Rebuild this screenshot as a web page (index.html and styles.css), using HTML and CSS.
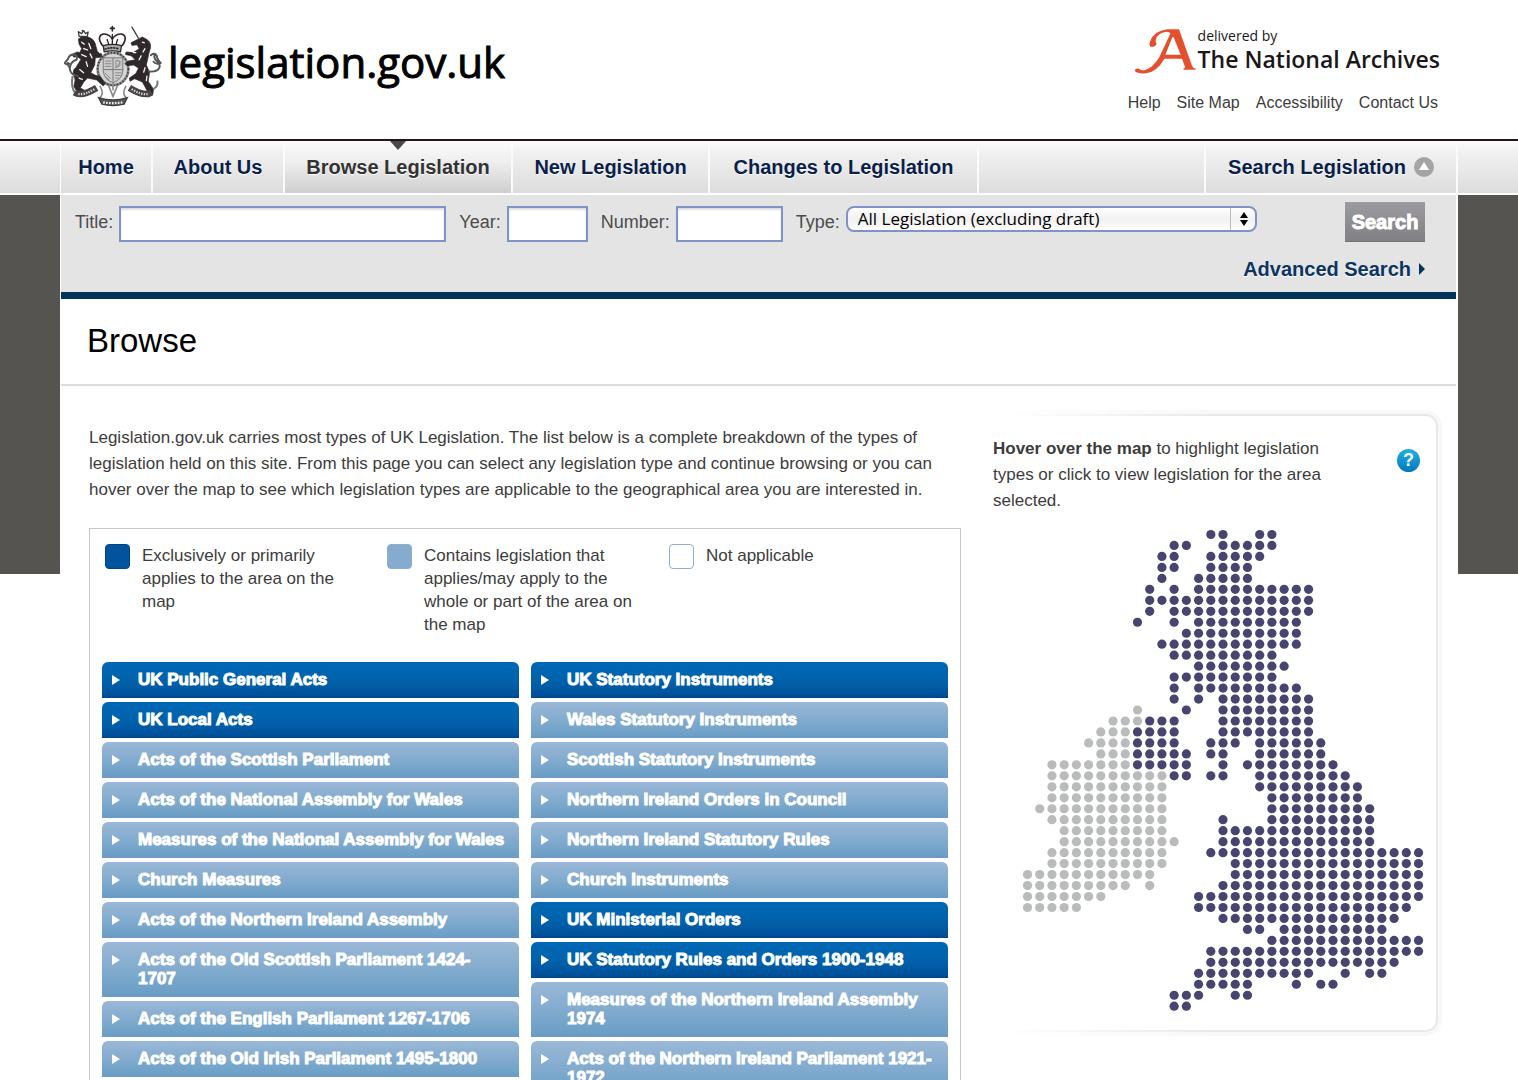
FILE: index.html
```html
<!DOCTYPE html>
<html lang="en">
<head>
<meta charset="utf-8">
<meta name="viewport" content="width=device-width, initial-scale=1">
<title>Browse - Legislation.gov.uk</title>
<link rel="stylesheet" href="styles.css">
</head>
<body>
<header class="wrap masthead">
  <a class="brand" href="#">
    <svg class="crest" viewBox="40 40 300 250" aria-hidden="true">
      <g fill="none" stroke="#2a2528" stroke-width="5" stroke-linecap="round" stroke-linejoin="round">
        <path d="M188 44v14M182 50h12M158 102c-16-20-10-36 6-35 12 1 20 8 24 16 4-8 12-15 24-16 16-1 22 15 6 35"/>
        <path d="M188 68v34M172 84l4 12M204 84l-4 12" stroke-width="4"/>
        <path d="M160 103q28-8 56 0l-3 19q-25-7-50 0z" fill="#aaa" stroke-width="4"/>
        <path d="M166 113q22-7 44 0" stroke-dasharray="3 6"/>
      </g>
      <g fill="none" stroke="#3a3538" stroke-width="5">
        <ellipse cx="190" cy="174" rx="47" ry="50" fill="#d5d5d5" stroke="#888" stroke-width="8"/>
        <ellipse cx="190" cy="174" rx="47" ry="50" stroke-dasharray="4 6"/>
        <path d="M160 140h60v40q-3 28-30 36-27-8-30-36z" fill="#ccc" stroke="#777" stroke-width="3"/>
        <path d="M190 140v72M160 176h60" stroke-width="3" stroke="#777"/>
        <path d="M165 150h20M165 158h20M165 166h20M197 186h18M197 194h16M197 202h10M165 186l18 18M168 198l10 10" stroke-width="3" stroke="#888"/>
        <path d="M199 148v22l12-6v-14zM199 170l14-18" stroke-width="3" stroke="#888"/>
      </g>
      <g fill="#2e282b" stroke="#2e282b" stroke-width="2" stroke-linejoin="round">
        <path d="M84 82q12-12 30-6 18 6 22 22l6 22q4 8 14 8l-2 10-18 2-2 22-12 24q12 8 30 12l14 22-6 6-20-18-28-6q-14 12-22 30l14 8-4 8-20-4-10-16 4-20-6-20q0-14 8-18l16-26-12-8-10 2-6-8 16-8 8 2 6-12-8-14z"/>
        <path d="M268 82l12-6 14 8q12 8 11 24l-5 18q-4 20-8 36l10 22-4 28 16 24-2 16-14 8-12-4 10-12-16-30-24-10-14 8-2-10 20-14 8-16-14-10-20 2-8-6 10-8 22-4-12-12-18-4 2-8 22 2 18-12-6-12-16 2-3-8z"/>
      </g>
      <g fill="none" stroke="#f2f2f2" stroke-width="4" stroke-linecap="round">
        <path d="M94 92l8 6M100 112l12 4M116 96l6 16M94 130l14 6M88 176l12 10M86 202l10 4M120 128l6 12M108 152l4 14M280 92l6 2M288 112l-6 10M276 134l-6 12M288 170l-4 14M294 196l-2 14M260 124l-8 0"/>
      </g>
      <g fill="none" stroke="#3f393c" stroke-width="4" stroke-linecap="round" stroke-linejoin="round">
        <path d="M248 46l20 34M86 74l-2-14 10 6 6-9 6 9 8-5-3 14zM96 58v-2"/>
        <path d="M82 196q-26-6-24-26 2-18 20-24 6-14-8-16-14 0-18 14l-10 12q4 6 14 2M58 170q-8-6-6-14" stroke="#555" stroke-width="6"/>
        <path d="M300 182q26 2 32-12 4-12-10-22-10-10-2-20M306 132q10-10 18 2 0 10 12 22-14 6-22-4" stroke="#555" stroke-width="6"/>
        <path d="M66 198q-6 30 8 50M326 212q2 14-10 22" stroke="#777" stroke-width="6"/>
      </g>
      <g stroke-linecap="butt" fill="none">
        <path d="M72 246q22 14 68-14M308 246q-22 14-68-14" stroke="#4a4447" stroke-width="20"/>
        <path d="M84 251q24 2 50-16M296 251q-24 2-50-16" stroke="#ddd" stroke-width="7" stroke-dasharray="4 4"/>
        <path d="M150 226q14 24 0 36M230 226q-14 24 0 36M190 218v22M176 224l14 34 14-34" stroke="#888" stroke-width="5"/>
        <path d="M146 262l10 20q34 8 68 0l10-20q-44 14-88 0z" fill="#555" stroke="#3f393c" stroke-width="4"/>
        <path d="M160 276q30 6 60 0" stroke="#eee" stroke-width="7" stroke-dasharray="5 4"/>
      </g>
    </svg>
    <span class="brand-name">legislation.gov.uk</span>
  </a>
  <div class="masthead-side">
    <a class="archives" href="#">
      <svg class="archives-mark" viewBox="88 53 186 138" aria-hidden="true">
        <path fill="#e4502e" d="M188 57H223L262 166Q266 175 273 175V178H236V175Q243 173 240 166L232 145H179Q158 184 124 189Q98 191 90 181Q92 173 103 175Q112 183 124 178Q144 171 163 142L197 70Q196 64 184 64Q160 67 153 88Q152 96 156 100Q150 112 138 109Q132 105 136 94Q146 62 188 57ZM203 81L182 133H228L207 81Z"/>
      </svg>
      <span class="archives-text"><small>delivered by</small><strong>The National Archives</strong></span>
    </a>
    <nav class="utility" aria-label="Site help">
      <a href="#">Help</a><a href="#">Site Map</a><a href="#">Accessibility</a><a href="#">Contact Us</a>
    </nav>
  </div>
</header>

<div class="navbar">
  <nav class="wrap tabs" aria-label="Main">
    <a href="#">Home</a>
    <a href="#">About Us</a>
    <a href="#" class="current" aria-current="page">Browse Legislation</a>
    <a href="#">New Legislation</a>
    <a href="#">Changes to Legislation</a>
    <span class="filler"></span>
    <a href="#search">Search Legislation
      <svg class="toggle" viewBox="0 0 20 20" aria-hidden="true"><circle cx="10" cy="10" r="10" fill="#a3a5a3"/><path d="M10 5l5 8H5z" fill="#fff"/></svg>
    </a>
  </nav>
</div>

<div class="stage">
  <div class="wrap sheet">
    <form class="search" id="search">
      <div class="fields">
        <label for="title">Title:</label><input class="f-title" id="title" type="text">
        <label for="year">Year:</label><input class="f-year" id="year" type="text">
        <label for="number">Number:</label><input class="f-number" id="number" type="text">
        <label for="type">Type:</label>
        <span class="select"><select id="type"><option>All Legislation (excluding draft)</option></select>
          <svg viewBox="0 0 8 16" aria-hidden="true"><path d="M4 1l4 6H0zM4 15L0 9h8z"/></svg></span>
        <button type="submit">Search</button>
      </div>
      <a class="advanced" href="#">Advanced Search</a>
    </form>

    <h1>Browse</h1>

    <main class="columns">
      <section>
        <p class="intro">Legislation.gov.uk carries most types of UK Legislation. The list below is a complete breakdown of the types of legislation held on this site. From this page you can select any legislation type and continue browsing or you can hover over the map to see which legislation types are applicable to the geographical area you are interested in.</p>
        <div class="types">
          <ul class="legend">
            <li><i class="swatch primary"></i><span>Exclusively or primarily applies to the area on the map</span></li>
            <li><i class="swatch partial"></i><span>Contains legislation that applies/may apply to the whole or part of the area on the map</span></li>
            <li><i class="swatch"></i><span>Not applicable</span></li>
          </ul>
          <div class="lists">
            <ul>
              <li><a class="primary" href="#">UK Public General Acts</a></li>
              <li><a class="primary" href="#">UK Local Acts</a></li>
              <li><a href="#">Acts of the Scottish Parliament</a></li>
              <li><a href="#">Acts of the National Assembly for Wales</a></li>
              <li><a href="#">Measures of the National Assembly for Wales</a></li>
              <li><a href="#">Church Measures</a></li>
              <li><a href="#">Acts of the Northern Ireland Assembly</a></li>
              <li><a href="#">Acts of the Old Scottish Parliament 1424-<wbr>1707</a></li>
              <li><a href="#">Acts of the English Parliament 1267-1706</a></li>
              <li><a href="#">Acts of the Old Irish Parliament 1495-1800</a></li>
            </ul>
            <ul>
              <li><a class="primary" href="#">UK Statutory Instruments</a></li>
              <li><a href="#">Wales Statutory Instruments</a></li>
              <li><a href="#">Scottish Statutory Instruments</a></li>
              <li><a href="#">Northern Ireland Orders in Council</a></li>
              <li><a href="#">Northern Ireland Statutory Rules</a></li>
              <li><a href="#">Church Instruments</a></li>
              <li><a class="primary" href="#">UK Ministerial Orders</a></li>
              <li><a class="primary" href="#">UK Statutory Rules and Orders 1900-1948</a></li>
              <li><a href="#">Measures of the Northern Ireland Assembly 1974</a></li>
              <li><a href="#">Acts of the Northern Ireland Parliament 1921-<wbr>1972</a></li>
            </ul>
          </div>
        </div>
      </section>

      <aside class="map-panel">
        <div class="map-head">
          <p><strong>Hover over the map</strong> to highlight legislation types or click to view legislation for the area selected.</p>
          <a class="help" href="#" aria-label="Help with the map">?</a>
        </div>
        <svg class="map" id="map" viewBox="0 0 402 484" role="img" aria-label="Map of the United Kingdom and Ireland"></svg>
      </aside>
    </main>
  </div>
</div>
<script src="map.js"></script>
</body>
</html>
```
FILE: styles.css
```css
* { box-sizing: border-box; }
body {
  margin: 0;
  background: #fff;
  color: #3c3c3c;
  font: 17px/26px "Liberation Sans", Arial, sans-serif;
}
a { color: inherit; text-decoration: none; }
ul { list-style: none; margin: 0; padding: 0; }
.wrap { max-width: 1398px; margin: 0 auto; }

/* masthead */
.masthead { display: flex; justify-content: space-between; height: 139px; padding: 24px 18px 0 4px; }
.brand { display: flex; align-items: flex-start; gap: 6px; color: #000; }
.crest { width: 98px; height: 84px; }
.brand-name { font: 42px/76px "Open Sans", sans-serif; -webkit-text-stroke: 1px #000; }
.masthead-side { display: flex; flex-direction: column; align-items: flex-end; }
.archives { display: flex; gap: 2px; padding-top: 4px; color: #1a1718; }
.archives-mark { width: 62px; height: 46px; }
.archives-text { display: flex; flex-direction: column; font-family: "Open Sans", sans-serif; }
.archives-text small { font-size: 14px; line-height: 16px; }
.archives-text strong { font-weight: 600; font-size: 23px; line-height: 30px; }
.utility { display: flex; gap: 16px; padding-right: 2px; margin-top: 16px; font-size: 16px; line-height: 26px; }

/* main navigation */
.navbar { height: 56px; border-top: 2px solid #2b1116; border-bottom: 2px solid #fff; background: linear-gradient(#fcfcfc, #f1f1f1 20%, #dcdcdc); }
.tabs {
  display: grid;
  grid-template-columns: 92px 132px 228px 197px 269px 1fr 252px;
  height: 100%;
  border-left: 1px solid #fff;
  font-size: 20px;
  font-weight: bold;
  color: #0a1f4a;
}
.tabs > * { display: flex; align-items: center; justify-content: center; gap: 8px; border-right: 2px solid #fbfbfb; padding-bottom: 1px; text-shadow: 0 1px 1px #fff; }
.tabs .current { position: relative; color: #333; background: linear-gradient(#fcfcfc, #eee 40%, #cfcfcf); }
.current::before { content: ""; position: absolute; top: 0; left: calc(50% - 8px); border: 8px solid transparent; border-top: 9px solid #484848; border-bottom: 0; }
.toggle { width: 20px; height: 20px; }

/* page sheet over the dark band */
.stage { background: linear-gradient(#555451, #555451) 0 0 / 100% 379px no-repeat; }
.sheet { background: #fff; border: solid #fff; border-width: 0 2px 0 1px; }

/* search */
.search { background: #e4e4e4; border-bottom: 7px solid #003459; padding: 7px 31px 8px 14px; height: 104px; }
.fields { display: flex; align-items: flex-end; height: 40px; font-size: 18px; }
.fields label { align-self: center; margin-right: 6px; color: #4c4c4c; }
.fields input { height: 36px; border: 2px solid #8093c4; border-radius: 0; background: #fff; box-shadow: inset 0 2px 2px #ddd; font: inherit; padding: 0 6px; min-width: 0; }
.fields .f-title { width: 327px; margin-right: 13px; }
.fields .f-year { width: 81px; margin-right: 13px; }
.fields .f-number { width: 107px; margin-right: 13px; }
.select { position: relative; flex: 0 1 411px; align-self: flex-start; margin-top: 4px; display: flex; }
.select select { appearance: none; width: 100%; height: 26px; margin: 0; border: 2px solid #8093c4; border-radius: 8px; padding: 0 30px 0 10px; color: #000; font: 17px/22px "Open Sans", sans-serif; background: linear-gradient(90deg, transparent calc(100% - 25px), #bbb calc(100% - 25px), #bbb calc(100% - 24px), transparent calc(100% - 24px)), linear-gradient(#fff, #f0f0f0 50%, #fff); }
.select svg { position: absolute; right: 9px; top: 5px; width: 8px; height: 16px; pointer-events: none; }
.fields button { margin-left: auto; width: 80px; height: 40px; padding: 0; border: 0; border-bottom: 1px solid #74747a; color: #fff; font: bold 20px/38px "Liberation Sans", Arial, sans-serif; background: linear-gradient(#9b9ba0, #808085); -webkit-text-stroke: 1px #fff; }
.advanced { display: flex; align-items: center; justify-content: flex-end; gap: 8px; margin-top: 14px; font-size: 20px; font-weight: bold; color: #0b3560; text-shadow: 0 1px 1px #fff; }
.advanced::after { content: ""; border: 6px solid transparent; border-left-color: #003459; border-right: 0; }

h1 { margin: 0; padding: 22px 26px 23px; border-bottom: 2px solid #ddd; color: #000; font-size: 33px; line-height: 40px; font-weight: normal; }

/* content */
.columns { display: grid; grid-template-columns: minmax(0, 1fr) 446px; gap: 31px; padding: 28px 18px 0 28px; align-items: start; }
.intro { margin: 0; padding-top: 11px; }
.types { margin-top: 25px; padding: 15px 12px; border: 1px solid #c6c6c6; }
.legend { display: flex; line-height: 23px; min-height: 118px; padding-left: 3px; }
.legend li { flex: none; display: flex; gap: 12px; width: 282px; padding-right: 24px; }
.legend li:last-child { flex: 1; padding-right: 0; }
.swatch { flex: none; width: 25px; height: 25px; border-radius: 4px; border: 1px solid #8fb0cd; }
.swatch.primary { background: #00539c; border-color: #00458a; }
.swatch.partial { background: #85abcf; }
.lists { display: grid; grid-template-columns: 1fr 1fr; gap: 12px; }
.lists ul { display: grid; gap: 4px; align-content: start; }
.lists a {
  position: relative;
  display: block;
  min-height: 36px;
  padding: 8px 12px 9px 36px;
  border-radius: 6px 6px 0 0;
  background: linear-gradient(#9bb8d7, #72a3c9 80%, #6b9bc4);
  color: #fff;
  line-height: 19px;
  font-weight: bold;
  -webkit-text-stroke: 1px #fff;
}
.lists a.primary { background: linear-gradient(#0067b5, #0062ac 50%, #00529b 90%, #00458c); }
.lists a::before { content: ""; position: absolute; left: 10px; top: 13px; border: 5px solid transparent; border-left: 8px solid #fff; border-right: 0; }

.map-panel { position: relative; height: 618px; padding: 22px 14px 0 1px; }
.map-panel::before { content: ""; position: absolute; inset: -4px -4px -4px 0; border: 4px solid #f8f8f8; border-left: 0; border-radius: 0 16px 16px 0; box-shadow: inset 0 0 0 2px #e8e8e8; -webkit-mask-image: linear-gradient(90deg, transparent 2%, #000 50%); mask-image: linear-gradient(90deg, transparent 2%, #000 50%); pointer-events: none; }
.map-head { display: flex; justify-content: space-between; }
.map-head p { margin: 0; width: 350px; }
.help { width: 23px; height: 23px; margin: 13px 4px 0 0; border-radius: 50%; background: linear-gradient(#1fb0e6, #0578ba); color: #fff; text-align: center; font: bold 18px/23px "Liberation Sans", Arial, sans-serif; }
.map { display: block; width: 402px; height: 484px; margin: 15px 0 0 auto; }
.map .uk { fill: #47456f; }
.map .ireland { fill: #b9bcbb; }
```
FILE: map.js
```js
// Each entry is one row of dots, given as column runs.
const uk = [
  "15-16,19-20", "12-13,16-20", "11-12,15-19", "11-12,15-18", "11,14-18",
  "10,12,14-23", "10-23", "10,12-23", "9,12,14-22", "13-22", "11-22",
  "12-20", "14-21", "12-20", "12,14-22", "12,14,16-23", "13,16-23",
  "10-12,16-23", "9-12,16-23", "9-12,15-17,19-24", "9-13,15-16,19-24",
  "9-13,16,18-25", "12-13,15-16,19-26", "19-27", "20-27", "20-28",
  "16,20-28", "16-28", "16-28", "15-32", "17-32", "17-32", "16-32",
  "14-32", "14-31", "16-30", "18-19,21-29", "20-32", "15-32", "15-30",
  "14-23,26,28-29", "14-18,22,24-25", "12-14,17-18", "12-13"
];
const ireland = [
  "9", "7-9", "6-8", "5-8", "6-8", "2-8", "2-11", "2-11", "2-11", "1-11",
  "2-11", "3-11", "3-12", "2-11", "2-11", "0-10", "0-8,10", "0-6", "0-4"
];

function plot(rows, firstRow, className) {
  const group = document.createElementNS("http://www.w3.org/2000/svg", "g");
  group.setAttribute("class", className);
  rows.forEach((runs, i) => {
    runs.split(",").forEach(run => {
      const [from, to = from] = run.split("-").map(Number);
      for (let col = from; col <= to; col++) {
        const dot = document.createElementNS("http://www.w3.org/2000/svg", "circle");
        dot.setAttribute("cx", 5.5 + col * 12.22);
        dot.setAttribute("cy", 5.5 + (firstRow + i) * 10.97);
        dot.setAttribute("r", 4.6);
        group.append(dot);
      }
    });
  });
  document.getElementById("map").append(group);
}

plot(uk, 0, "uk");
plot(ireland, 16, "ireland");
```
